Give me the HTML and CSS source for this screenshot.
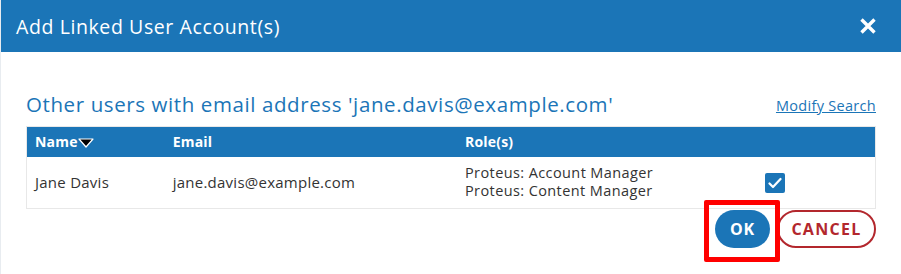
FILE: index.html
```html
<!DOCTYPE html>
<html>
<head>
<meta charset="utf-8">
<link rel="stylesheet" href="styles.css">
</head>
<body>
<div class="dialog">
  <div class="titlebar">
    <span class="title">Add Linked User Account(s)</span>
    <svg class="close" width="18" height="18" viewBox="0 0 18 18"><path d="M2.5 2.5 L15.5 15.5 M15.5 2.5 L2.5 15.5" stroke="#fff" stroke-width="3.4" stroke-linecap="butt"/></svg>
  </div>
  <div class="content">
    <div class="headline">
      <h2 class="heading">Other users with email address 'jane.davis@example.com'</h2>
      <a class="modify" href="#">Modify Search</a>
    </div>
    <table class="grid">
      <colgroup><col class="c1"><col class="c2"><col class="c3"><col class="c4"></colgroup>
      <thead>
        <tr>
          <th>Name<svg class="sort" width="16" height="10" viewBox="0 0 16 10"><polygon points="1,1 15,1 8,9" fill="#000" stroke="#fff" stroke-width="1.2" stroke-linejoin="round"/></svg></th>
          <th>Email</th>
          <th>Role(s)</th>
          <th></th>
        </tr>
      </thead>
      <tbody>
        <tr>
          <td>Jane Davis</td>
          <td>jane.davis@example.com</td>
          <td class="roles"><div>Proteus: Account Manager</div><div>Proteus: Content Manager</div></td>
          <td class="chk"><span class="checkbox"><svg width="14" height="12" viewBox="0 0 14 12"><path d="M1.5 6.5 L5 10 L12.5 2" fill="none" stroke="#fff" stroke-width="2.2" stroke-linecap="round" stroke-linejoin="round"/></svg></span></td>
        </tr>
      </tbody>
    </table>
    <div class="actions">
      <div class="okwrap">
        <button class="ok">OK</button>
        <span class="highlight"></span>
      </div>
      <button class="cancel">CANCEL</button>
    </div>
  </div>
</div>
</body>
</html>
```

FILE: styles.css
```css
html, body {
  margin: 0;
  padding: 0;
  background: #ffffff;
}
body {
  font-family: "Open Sans", "DejaVu Sans", sans-serif;
  color: #333333;
}
.dialog {
  width: 901px;
  height: 274px;
  box-sizing: border-box;
  border-left: 1px solid #e8ecf0;
  overflow: hidden;
}
.titlebar {
  height: 52px;
  background: #1b75b7;
  display: flex;
  align-items: center;
  justify-content: space-between;
  padding: 0 24px 0 15px;
}
.title {
  color: #ffffff;
  font-size: 19.5px;
  font-weight: 400;
  letter-spacing: 0.6px;
}
.close {
  display: block;
}
.content {
  padding: 0 25px 0 25px;
}
.headline {
  display: flex;
  align-items: center;
  justify-content: space-between;
  height: 30px;
  margin-top: 37px;
  margin-bottom: 7px;
}
.heading {
  margin: 0;
  font-size: 20.5px;
  font-weight: 400;
  color: #1b75b7;
  letter-spacing: 0.6px;
}
.modify {
  font-size: 14.5px;
  color: #1b75b7;
  text-decoration: underline;
  padding-top: 2px;
  letter-spacing: 0.3px;
}
.grid {
  width: 850px;
  border-collapse: collapse;
  border: 1px solid #e8e8e8;
  table-layout: fixed;
}
.c1 { width: 138px; }
.c2 { width: 292px; }
.c3 { width: 232px; }
.c4 { width: 186px; }
.grid th {
  background: #1b75b7;
  color: #ffffff;
  font-weight: 700;
  font-size: 14px;
  letter-spacing: 0.2px;
  text-align: left;
  height: 30px;
  padding: 0 8px;
  box-sizing: border-box;
}
.sort {
  vertical-align: -1px;
  margin-left: 0;
}
.grid td {
  height: 52px;
  padding: 0 8px;
  font-size: 15px;
  letter-spacing: 0.25px;
  box-sizing: border-box;
  vertical-align: middle;
}
.grid td.roles {
  font-size: 14.5px;
  letter-spacing: 0.4px;
}
.roles div {
  line-height: 18px;
  height: 18px;
}
.chk {
  text-align: center;
}
.checkbox {
  display: inline-flex;
  align-items: center;
  justify-content: center;
  width: 20px;
  height: 20px;
  background: #1b75b7;
  border-radius: 2px;
  vertical-align: middle;
  margin-right: 15px;
}
.checkbox svg { display: block; }
.actions {
  display: flex;
  justify-content: flex-end;
  align-items: center;
  gap: 7px;
  margin-top: 1px;
  padding-right: 0;
}
.okwrap {
  position: relative;
  display: flex;
}
.ok {
  width: 55px;
  height: 38px;
  border: none;
  border-radius: 19px;
  background: #1b75b7;
  color: #ffffff;
  font-family: "Open Sans", "DejaVu Sans", sans-serif;
  font-weight: 700;
  font-size: 16px;
  letter-spacing: 0.8px;
  padding: 0;
}
.highlight {
  position: absolute;
  left: -11px;
  top: -10px;
  width: 66px;
  height: 52px;
  border: 5px solid #ff0000;
  border-radius: 2px;
}
.cancel {
  height: 38px;
  width: 99px;
  border: 2px solid #b3272d;
  border-radius: 19px;
  background: #ffffff;
  color: #b3272d;
  font-family: "Open Sans", "DejaVu Sans", sans-serif;
  font-weight: 700;
  font-size: 16px;
  letter-spacing: 1.3px;
  padding: 0;
}
```
